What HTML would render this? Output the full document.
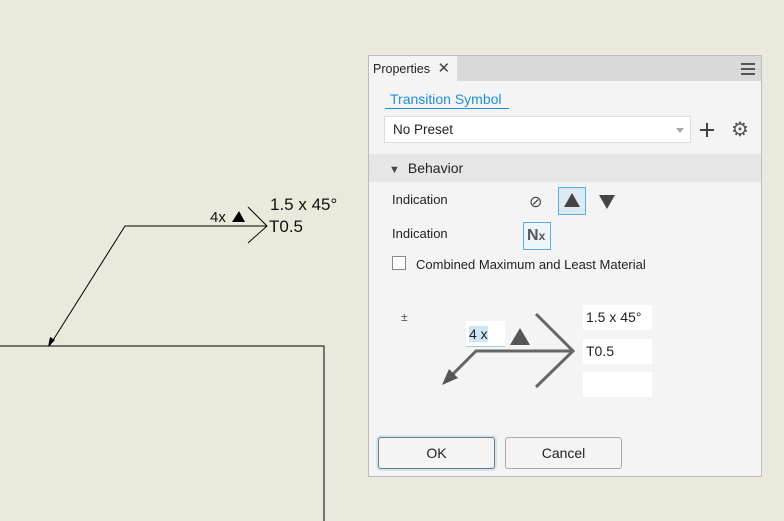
<!DOCTYPE html>
<html><head><style>
body{margin:0;width:784px;height:521px;background:#ebe9dc;position:relative;overflow:hidden;font-family:"Liberation Sans",sans-serif;}
.a{position:absolute}
.t{font-size:13px;color:#222}
</style></head><body>
<svg class="a" style="left:0;top:0" width="368" height="521">
<polyline points="0,346 324,346 324,521" fill="none" stroke="#000" stroke-width="1"/>
<polyline points="267,226 125,226 50,345" fill="none" stroke="#000" stroke-width="1"/>
<polygon points="48,347 50,337 55,340" fill="#000"/>
<polyline points="248,207 267,226 248,243" fill="none" stroke="#000" stroke-width="1"/>
<polygon points="232,222 239,211 245,222" fill="#000"/>
<text x="210" y="222" font-size="15" font-family="Liberation Sans" fill="#111">4x</text>
<text x="270" y="210" font-size="17" font-family="Liberation Sans" fill="#111">1.5 x 45°</text>
<text x="269" y="232" font-size="17" font-family="Liberation Sans" fill="#111">T0.5</text>
</svg>
<div class="a" style="left:368px;top:55px;width:392px;height:420px;background:#f4f4f4;border:1px solid #bdbdbd;">
 <div class="a" style="left:0;top:0;width:392px;height:25px;background:#d9d9d9"></div>
 <div class="a t" style="left:0;top:0;width:88px;height:25px;background:#f4f4f4;line-height:26px;font-size:12.5px;padding-left:4px;box-sizing:border-box">Properties <span style="font-size:15px;color:#444;margin-left:4px">✕</span></div>
 <div class="a" style="left:372px;top:7px;width:14px;height:2px;background:#555;box-shadow:0 5px 0 #555,0 10px 0 #555"></div>
 <div class="a" style="left:16px;top:35px;width:124px;height:18px;border-bottom:1.5px solid #1f8fd6;color:#1f8fd6;font-size:14px;padding-left:5px;box-sizing:border-box">Transition Symbol</div>
 <div class="a t" style="left:15px;top:60px;width:307px;height:27px;background:#fff;border:1px solid #ddd;box-sizing:border-box;line-height:25px;padding-left:8px;font-size:13.5px">No Preset<span class="a" style="right:6px;top:11px;border:4px solid transparent;border-top:5px solid #aaa"></span></div>
 <div class="a" style="left:331px;top:73px;width:14px;height:2px;background:#444"></div>
 <div class="a" style="left:337px;top:67px;width:2px;height:14px;background:#444"></div>
 <div class="a" style="left:362px;top:64px;color:#555;font-size:20px;line-height:20px">⚙</div>
 <div class="a t" style="left:0;top:98px;width:392px;height:28px;background:#e6e6e6;line-height:28px;font-size:14px"><span style="font-size:11px;margin:0 8px 0 20px;color:#444">▼</span>Behavior</div>
 <div class="a t" style="left:23px;top:136px">Indication</div>
 <div class="a t" style="left:23px;top:170px">Indication</div>
 <div class="a" style="left:160px;top:136px;font-size:16px;color:#444">⊘</div>
 <div class="a" style="left:189px;top:131px;width:28px;height:28px;background:#dbeaf4;border:1px solid #5aaee0;box-sizing:border-box"></div>
 <svg class="a" style="left:195px;top:137px" width="16" height="14"><polygon points="8,0 16,14 0,14" fill="#444"/></svg>
 <svg class="a" style="left:230px;top:139px" width="16" height="14"><polygon points="0,0 16,0 8,14" fill="#444"/></svg>
 <div class="a" style="left:154px;top:166px;width:28px;height:28px;border:1px solid #5aaee0;box-sizing:border-box;background:#eef5fa;font-weight:bold;color:#555;font-size:16px;line-height:26px;padding-left:3px">N<span style="font-size:12px">x</span></div>
 <div class="a" style="left:23px;top:200px;width:14px;height:14px;border:1px solid #888;background:#fff;box-sizing:border-box"></div>
 <div class="a t" style="left:47px;top:201px">Combined Maximum and Least Material</div>
 <div class="a" style="left:32px;top:254px;font-size:12px;color:#555">±</div>
 <div class="a t" style="left:97px;top:265px;width:39px;height:26px;background:#fff;border-bottom:1px solid #9cc9e4;box-sizing:border-box;font-size:14px;line-height:26px;padding-left:3px"><span style="background:#cde6f5">4 x</span></div>
 <svg class="a" style="left:70px;top:255px" width="140" height="90">
  <polygon points="71,34 81,17 91,34" fill="#555"/>
  <polyline points="97,3 134,40 97,76" fill="none" stroke="#666" stroke-width="3"/>
  <polyline points="134,40 37,40 7,70" fill="none" stroke="#666" stroke-width="3"/>
  <polygon points="3,74 10,58 19,67" fill="#555"/>
 </svg>
 <div class="a t" style="left:214px;top:249px;width:69px;height:25px;background:#fff;font-size:14px;line-height:25px;padding-left:3px;box-sizing:border-box">1.5 x 45°</div>
 <div class="a t" style="left:214px;top:283px;width:69px;height:25px;background:#fff;font-size:14px;line-height:25px;padding-left:3px;box-sizing:border-box">T0.5</div>
 <div class="a" style="left:214px;top:316px;width:69px;height:25px;background:#fff"></div>
 <div class="a t" style="left:9px;top:381px;width:117px;height:32px;border:1px solid #777;border-radius:3px;box-shadow:0 0 0 2px #cfe6f4;box-sizing:border-box;text-align:center;line-height:30px;font-size:14px;background:#f4f4f4">OK</div>
 <div class="a t" style="left:136px;top:381px;width:117px;height:32px;border:1px solid #aaa;border-radius:3px;box-sizing:border-box;text-align:center;line-height:30px;font-size:14px">Cancel</div>
</div>
</body></html>
